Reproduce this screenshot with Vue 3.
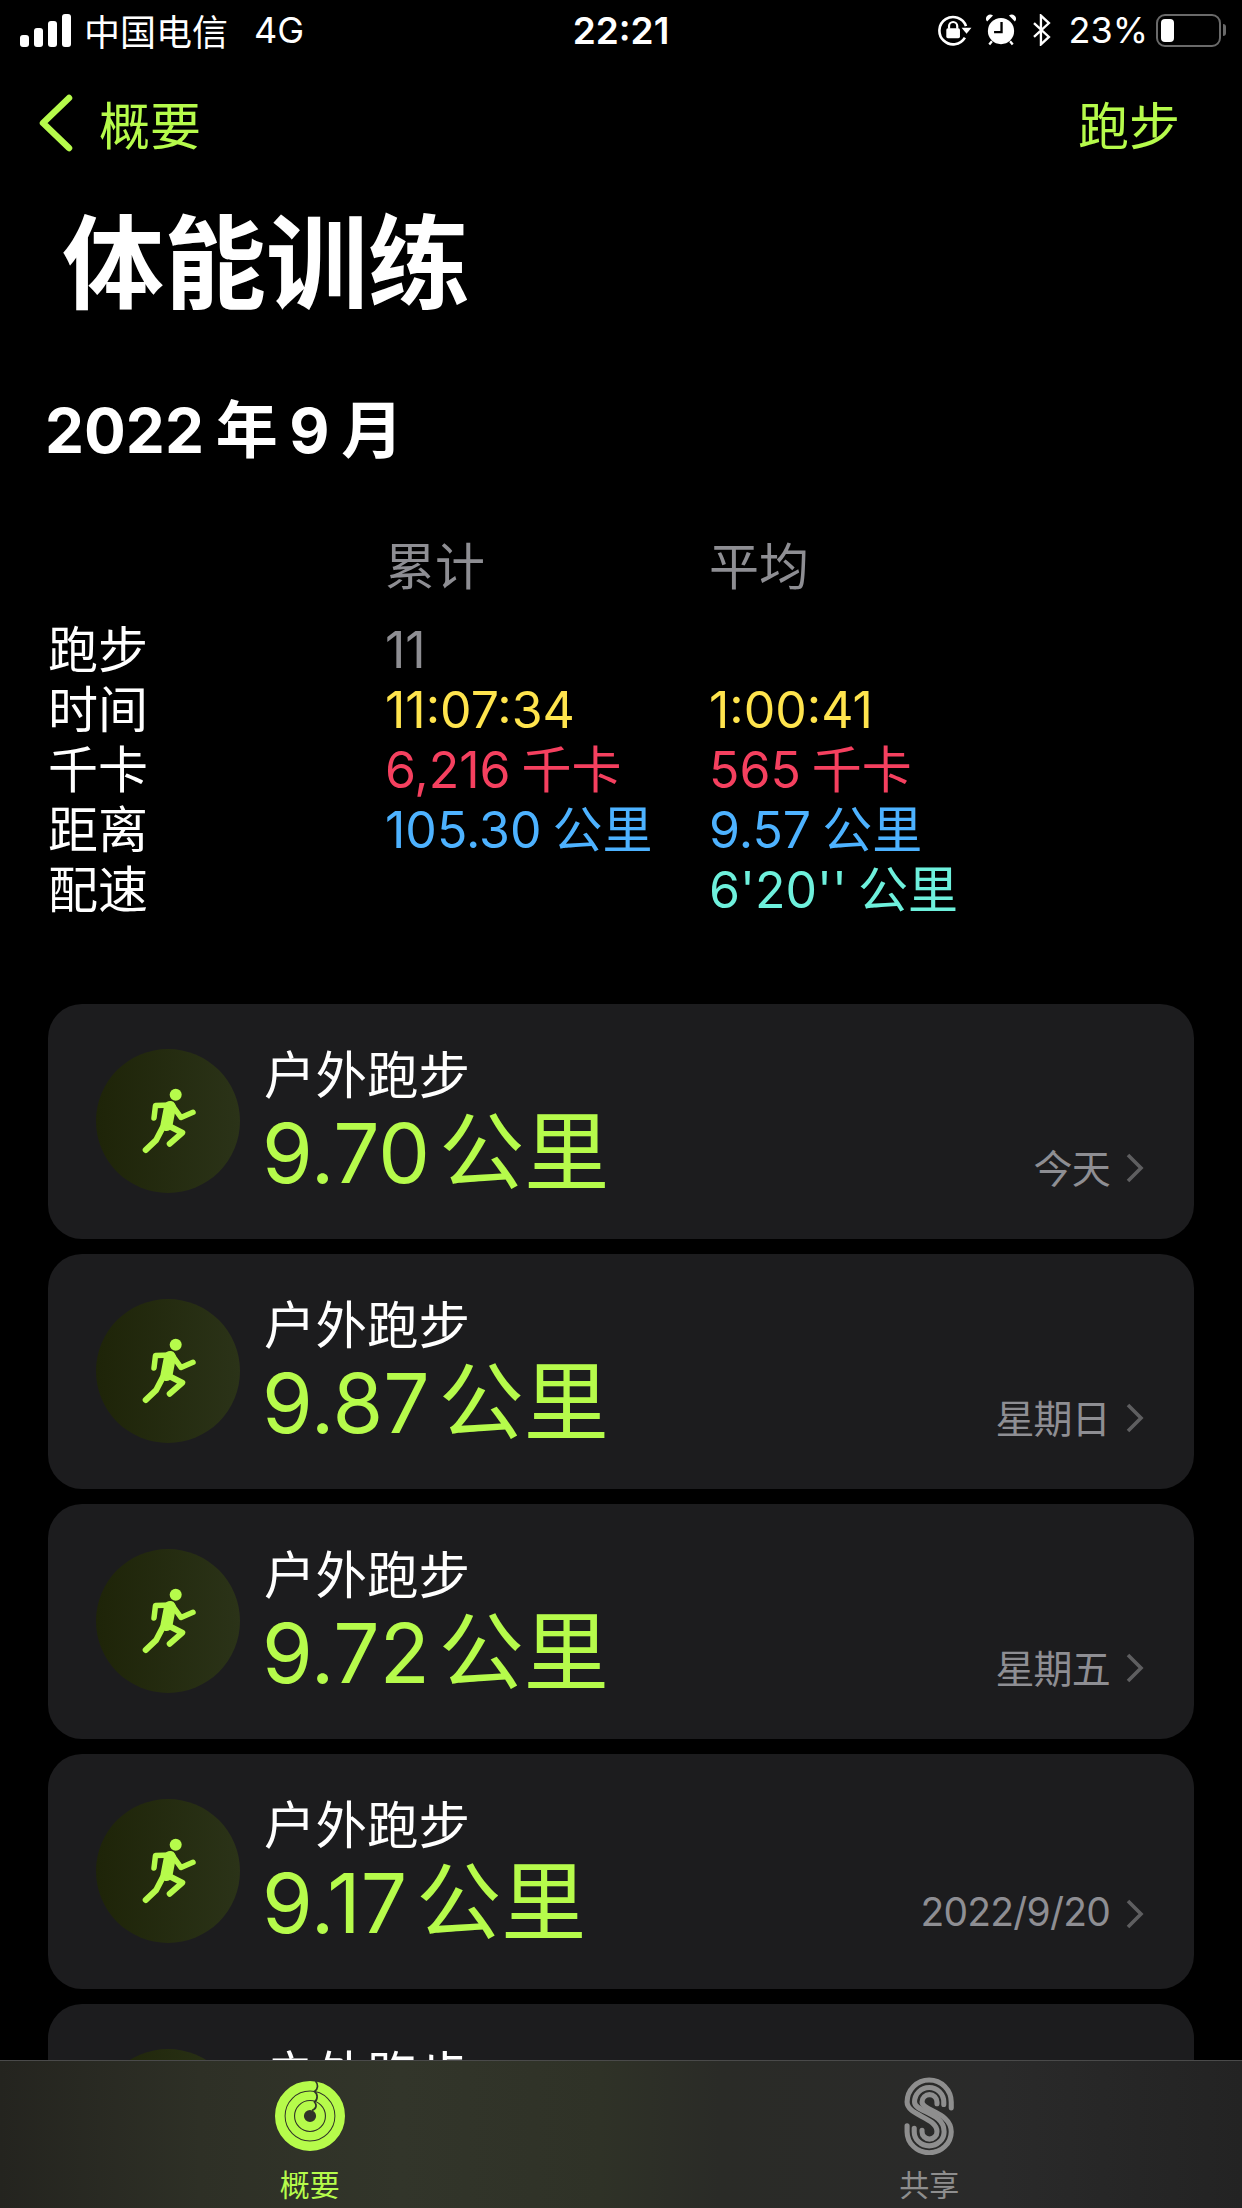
<template>
  <div class="screen">
    <div class="status-bar">
      <div class="status-left">
        <div class="signal">
          <span v-for="h in signalBars" :key="h" class="signal-bar" :style="{ height: h + 'px' }"></span>
        </div>
        <span class="carrier">中国电信</span>
        <span class="network">4G</span>
      </div>
      <div class="clock">22:21</div>
      <div class="status-right">
        <svg class="st-lock" width="35" height="31" viewBox="0 0 32 28">
          <path d="M25.500 20.500A12.500 12.500 0 1 1 26.500 10" fill="none" stroke="#fff" stroke-width="2.400" />
          <path d="M22.500 11.500h9l-4.500 5.500z" fill="#fff" />
          <rect x="8.500" y="12" width="12.500" height="9" rx="1.500" fill="#fff" />
          <path d="M11 12.500V10a3.700 3.700 0 0 1 7.500 0v2.500" fill="none" stroke="#fff" stroke-width="2" />
        </svg>
        <svg class="st-alarm" width="30" height="32" viewBox="0 0 28 30">
          <circle cx="14" cy="16" r="12.300" fill="#fff" />
          <path d="M1 7 6.500 1.500A3.900 3.900 0 0 0 1 7zM27 7 21.500 1.500A3.900 3.900 0 0 1 27 7z" fill="#fff" />
          <path d="M5.500 25.500 3 28.500M22.500 25.500 25 28.500" stroke="#fff" stroke-width="2.200" />
          <path d="M14.500 7.500v9.500H7.500" fill="none" stroke="#000" stroke-width="2.200" />
        </svg>
        <svg class="st-bt" width="20" height="32" viewBox="0 0 18 30">
          <path d="M1.500 8.500 15.500 21.500 8 28.500V1.500l7.500 7L1.500 21.500" fill="none" stroke="#fff" stroke-width="2.200" />
        </svg>
        <span class="battery-text">23%</span>
        <div class="battery">
          <div class="battery-body"><span class="battery-fill"></span></div>
          <span class="battery-nub"></span>
        </div>
      </div>
    </div>

    <div class="nav">
      <div class="nav-back">
        <svg width="36" height="58" viewBox="0 0 36 58">
          <path d="M31 4 5 29l26 25" fill="none" stroke="#b6fb4b" stroke-width="6.500" stroke-linecap="round" stroke-linejoin="round" />
        </svg>
        <span>概要</span>
      </div>
      <span class="nav-right">跑步</span>
    </div>

    <h1 class="title">体能训练</h1>
    <h2 class="month">2022 年 9 月</h2>

    <div class="summary">
      <div class="summary-head">累计</div>
      <div class="summary-head">平均</div>
      <template v-for="row in summary" :key="row.label">
        <div class="summary-label">{{ row.label }}</div>
        <div :class="row.cls">{{ row.total }}</div>
        <div :class="row.cls">{{ row.avg }}</div>
      </template>
    </div>

    <div class="list">
      <div v-for="w in workouts" :key="w.id" class="card">
        <div class="badge">
          <svg width="60" height="72" viewBox="0 0 60 72">
            <circle cx="36.700" cy="7.700" r="6" fill="#b6fb4b" />
            <g fill="none" stroke="#b6fb4b" stroke-linecap="round" stroke-linejoin="round">
              <path d="M15 31 16.500 18.500 33 18l9 12.500 12-5.200" stroke-width="5.500" />
              <path d="M31 20 27.500 38" stroke-width="12" />
              <path d="M28 38 43.300 45.700 30.700 56.700" stroke-width="6" />
              <path d="M25 38 17 53.300 6.700 63" stroke-width="6" />
            </g>
          </svg>
        </div>
        <div class="card-main">
          <div class="card-name">户外跑步</div>
          <div v-if="w.km" class="card-value">{{ w.km }} <span class="unit">公里</span></div>
        </div>
        <div v-if="w.date" class="card-date">
          <span>{{ w.date }}</span>
          <svg width="18" height="30" viewBox="0 0 18 30">
            <path d="M2 2l13 13L2 28" fill="none" stroke="#5e5e60" stroke-width="3.600" />
          </svg>
        </div>
      </div>
    </div>

    <div class="tabbar">
      <div class="tab tab-active">
        <div class="tab-icon">
          <svg width="70" height="70" viewBox="0 0 70 70">
            <g fill="none" stroke="#b6fb4b">
              <circle cx="35" cy="35" r="30.200" stroke-width="9.600" />
              <circle cx="35" cy="35" r="20.200" stroke-width="8.400" />
              <circle cx="35" cy="35" r="10.500" stroke-width="8.800" />
            </g>
            <path d="M40.500 0C43.500 3.500 43 8.500 39.500 10.500 43 13 43 18.500 39.500 21 42 24 41.500 28 37 29.500" fill="none" stroke="#30332a" stroke-width="1.700" />
          </svg>
        </div>
        <span>概要</span>
      </div>
      <div class="tab">
        <div class="tab-icon">
          <svg width="53" height="78" viewBox="60 22 156 228">
            <g fill="none" stroke="#8e8e8e" stroke-width="15" stroke-linecap="round">
              <path d="M202 112V95A65 65 0 0 0 72 95C72 135 160 140 160 182A22 22 0 0 1 116 182V178" />
              <path d="M180 102V95A43 43 0 0 0 94 95C94 125 181 125 181 182A44 42 0 0 1 93 182V172" />
              <path d="M160 100V95A22 22 0 0 0 116 95C116 120 202 125 202 182A65 62 0 0 1 72 182V165" />
            </g>
          </svg>
        </div>
        <span>共享</span>
      </div>
    </div>
  </div>
</template>

<script setup>
const signalBars = [12, 19, 26, 33]

const summary = [
  { label: '跑步', total: '11', avg: '', cls: 'v-gray' },
  { label: '时间', total: '11:07:34', avg: '1:00:41', cls: 'v-yellow' },
  { label: '千卡', total: '6,216 千卡', avg: '565 千卡', cls: 'v-red' },
  { label: '距离', total: '105.30 公里', avg: '9.57 公里', cls: 'v-blue' },
  { label: '配速', total: '', avg: "6'20'' 公里", cls: 'v-cyan' }
]

// the fifth card is cut off by the tab bar, only its name shows
const workouts = [
  { id: 1, km: '9.70', date: '今天' },
  { id: 2, km: '9.87', date: '星期日' },
  { id: 3, km: '9.72', date: '星期五' },
  { id: 4, km: '9.17', date: '2022/9/20' },
  { id: 5, km: '', date: '' }
]
</script>

<style>
html, body { background: #000; }
</style>

<style scoped>
.screen {
  position: relative;
  width: 1242px;
  height: 2208px;
  overflow: hidden;
  background: #000;
  color: #fff;
  font-family: Inter, "Noto Sans CJK SC", sans-serif;
}
.status-bar { display: flex; justify-content: space-between; align-items: center; height: 60px; padding: 0 16px 0 20px; }
.status-left { display: flex; align-items: center; width: 400px; }
.signal { display: flex; align-items: flex-end; gap: 5px; margin-right: 13px; }
.signal-bar { width: 9px; background: #fff; border-radius: 3px; }
.carrier { font-size: 36px; }
.network { font-size: 36px; margin-left: 26px; }
.clock { font-size: 37px; font-weight: 600; margin-left: -4px; }
.status-right { display: flex; align-items: center; justify-content: flex-end; width: 400px; }
.st-lock { margin-right: 14px; }
.st-alarm { margin-right: 16px; }
.st-bt { margin-right: 16px; }
.battery-text { font-size: 36px; margin-right: 8px; }
.battery { display: flex; align-items: center; }
.battery-body { width: 65px; height: 33px; box-sizing: border-box; border: 2.500px solid #6a6a6a; border-radius: 9px; padding: 3px; display: flex; }
.battery-fill { width: 13px; background: #fff; border-radius: 4px; }
.battery-nub { width: 3px; height: 12px; background: #6a6a6a; border-radius: 0 3px 3px 0; margin-left: 2px; }

.nav { display: flex; justify-content: space-between; align-items: center; height: 60px; margin-top: 33px; padding: 0 62px 0 38px; color: #b6fb4b; font-size: 51px; }
.nav-back { display: flex; align-items: center; gap: 25px; }
.title { margin: 46px 0 0 62px; font-size: 102px; line-height: 130px; font-weight: 700; }
.month { margin: 57px 0 0 45px; font-size: 62px; line-height: 90px; font-weight: 700; word-spacing: -3px; }

.summary {
  display: grid;
  grid-template-columns: 337px 324px 1fr;
  grid-template-rows: 82.500px;
  grid-auto-rows: 60.200px;
  margin: 61px 0 0 48px;
  font-size: 50px;
  line-height: 60px;
  word-spacing: -3px;
}
.summary-head { color: #8e8e93; }
.summary-head:first-child { grid-column: 2; }
.v-gray { color: #8e8e93; }
.v-yellow { color: #ffe44d; }
.v-red { color: #f5405f; }
.v-blue { color: #4db2ff; }
.v-cyan { color: #6ef0dc; }

.list { display: flex; flex-direction: column; gap: 15px; margin: 0 48px; padding-top: 84px; }
.card { display: flex; flex-shrink: 0; height: 235px; background: #1c1c1e; border-radius: 34px; padding: 45px 50px 0 48px; box-sizing: border-box; }
.badge { width: 144px; height: 144px; flex-shrink: 0; border-radius: 50%; background: linear-gradient(90deg, #1e2408, #2b3318); display: flex; align-items: center; justify-content: center; }
.badge svg { margin: 3px 0 0 2px; }
.card-main { margin-left: 24px; flex: 1; margin-top: -6px; }
.card-name { font-size: 51.500px; line-height: 64px; }
.card-value { color: #b6fb4b; font-size: 82px; line-height: 92px; font-weight: 400; margin-left: -2px; word-spacing: -14px; }
.unit { font-size: 85px; }
.card-date { display: flex; align-items: center; gap: 16px; color: #8e8e93; font-size: 39px; letter-spacing: -0.8px; align-self: flex-start; margin-top: 89px; }
.card-date svg { margin-top: 4px; }

.tabbar {
  position: absolute;
  left: 0;
  right: 0;
  bottom: 0;
  height: 148px;
  box-sizing: border-box;
  padding: 16px 3px 0 0;
  border-top: 1px solid #4a4a4a;
  background: linear-gradient(90deg, #24241f 0, #2e3026 200px, #32352a 400px, #2f3227 600px, #2a2b27 720px, #2a2a2a 1000px, #232323 1242px);
  display: grid;
  grid-template-columns: 1fr 1fr;
}
.tab { display: flex; flex-direction: column; align-items: center; color: #8e8e8e; font-size: 30px; line-height: 36px; }
.tab-active { color: #b6fb4b; }
.tab-icon { height: 78px; display: flex; align-items: center; justify-content: center; margin-bottom: 12px; }
</style>
